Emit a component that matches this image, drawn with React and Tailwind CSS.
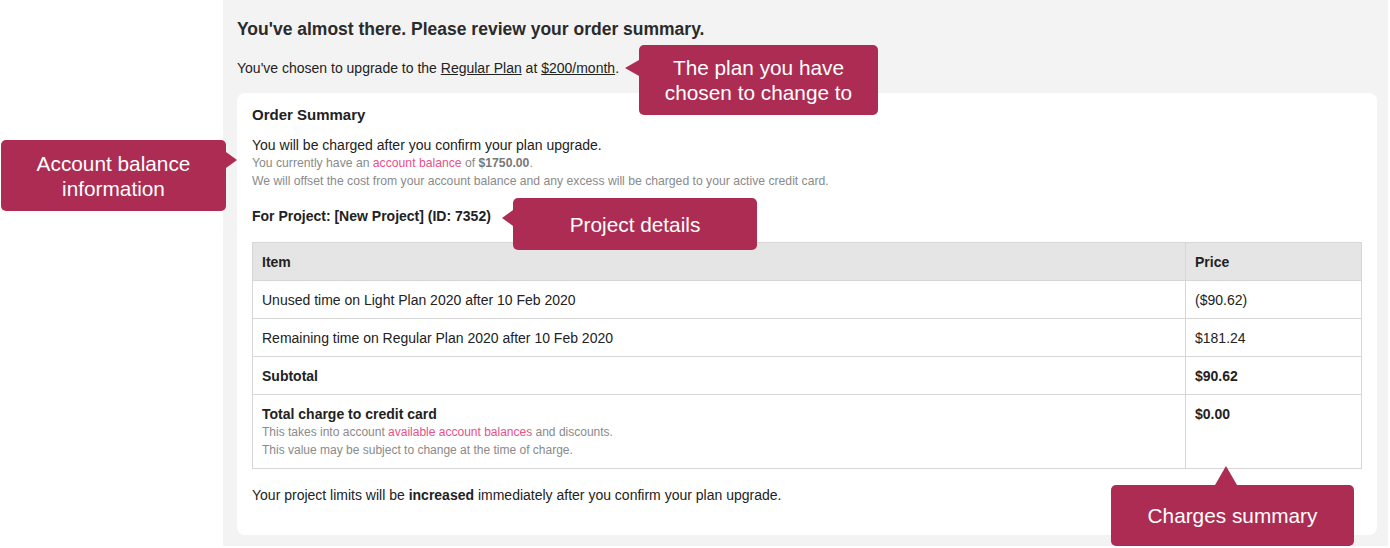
const font = { fontFamily: "'Liberation Sans', Arial, sans-serif" }

function Callout({ className, arrow, children }) {
  return (
    <div className={`absolute bg-[#ad2c53] text-white text-[20.8px] leading-[25px] text-center rounded-[5px] flex items-center justify-center ${className}`}>
      {arrow}
      <span>{children}</span>
    </div>
  )
}

export default function App() {
  return (
    <div className="relative w-[1390px] h-[548px] bg-white overflow-hidden text-[#222]" style={font}>
      <div className="flex h-full">
        <div className="w-[223px] shrink-0" />
        <div className="flex-1 mr-[2px] mb-[2px] bg-[#f3f3f3] pl-[14px] pr-[11px] pt-[17px]">
          <h1 className="text-[17.5px] leading-6 font-bold text-[#2b2b2b]">You've almost there. Please review your order summary.</h1>
          <p className="mt-[18px] text-[14px] leading-[18px]">
            You've chosen to upgrade to the <span className="underline">Regular Plan</span> at <span className="underline">$200/month</span>.
          </p>
          <div className="mt-4 bg-white rounded-lg px-[15px] pt-[12px] pb-[31px]">
            <h2 className="text-[15px] leading-5 font-bold">Order Summary</h2>
            <p className="mt-[11px] text-[14px] leading-[18px]">You will be charged after you confirm your plan upgrade.</p>
            <p className="text-[12.2px] leading-[18px] text-[#8a8a8a]">
              You currently have an <span className="text-[#e8508a]">account balance</span> of <b className="text-[#777]">$1750.00</b>.
            </p>
            <p className="text-[12.2px] leading-[18px] text-[#8a8a8a]">
              We will offset the cost from your account balance and any excess will be charged to your active credit card.
            </p>
            <p className="mt-[17px] text-[14px] leading-[18px] font-bold">For Project: [New Project] (ID: 7352)</p>
            <table className="mt-[17px] w-full border-collapse text-[14px] leading-[18px]">
              <thead>
                <tr className="bg-[#e5e5e5] h-[38px]">
                  <th className="border border-[#d6d6d6] text-left font-bold px-[9px]">Item</th>
                  <th className="border border-[#d6d6d6] text-left font-bold px-[9px] w-[176px]">Price</th>
                </tr>
              </thead>
              <tbody>
                <tr className="h-[38px]">
                  <td className="border border-[#d6d6d6] px-[9px]">Unused time on Light Plan 2020 after 10 Feb 2020</td>
                  <td className="border border-[#d6d6d6] px-[9px]">($90.62)</td>
                </tr>
                <tr className="h-[38px]">
                  <td className="border border-[#d6d6d6] px-[9px]">Remaining time on Regular Plan 2020 after 10 Feb 2020</td>
                  <td className="border border-[#d6d6d6] px-[9px]">$181.24</td>
                </tr>
                <tr className="h-[38px]">
                  <td className="border border-[#d6d6d6] px-[9px] font-bold">Subtotal</td>
                  <td className="border border-[#d6d6d6] px-[9px] font-bold">$90.62</td>
                </tr>
                <tr className="h-[73px]">
                  <td className="border border-[#d6d6d6] px-[9px] pt-[10px] pb-[9px] align-top">
                    <div className="font-bold">Total charge to credit card</div>
                    <div className="text-[12px] leading-[18px] text-[#8a8a8a]">
                      This takes into account <span className="text-[#e8508a]">available account balances</span> and discounts.
                    </div>
                    <div className="text-[12px] leading-[18px] text-[#8a8a8a]">This value may be subject to change at the time of charge.</div>
                  </td>
                  <td className="border border-[#d6d6d6] px-[9px] pt-[10px] align-top font-bold">$0.00</td>
                </tr>
              </tbody>
            </table>
            <p className="mt-[17px] text-[14px] leading-[18px]">
              Your project limits will be <b>increased</b> immediately after you confirm your plan upgrade.
            </p>
          </div>
        </div>
      </div>

      <Callout
        className="left-[639px] top-[45px] w-[239px] h-[70px]"
        arrow={<span className="absolute left-[-14px] top-[15px] w-0 h-0 border-y-[8px] border-y-transparent border-r-[14px] border-r-[#ad2c53]" />}
      >
        The plan you have<br />chosen to change to
      </Callout>
      <Callout
        className="left-[1px] top-[140px] w-[225px] h-[71px]"
        arrow={<span className="absolute right-[-11px] top-[12px] w-0 h-0 border-y-[8px] border-y-transparent border-l-[11px] border-l-[#ad2c53]" />}
      >
        Account balance<br />information
      </Callout>
      <Callout
        className="left-[513px] top-[198px] w-[244px] h-[52px]"
        arrow={<span className="absolute left-[-11px] top-[12px] w-0 h-0 border-y-[8px] border-y-transparent border-r-[11px] border-r-[#ad2c53]" />}
      >
        Project details
      </Callout>
      <Callout
        className="left-[1111px] top-[485px] w-[243px] h-[61px]"
        arrow={<span className="absolute left-[104px] top-[-19px] w-0 h-0 border-x-[11px] border-x-transparent border-b-[19px] border-b-[#ad2c53]" />}
      >
        Charges summary
      </Callout>
    </div>
  )
}
